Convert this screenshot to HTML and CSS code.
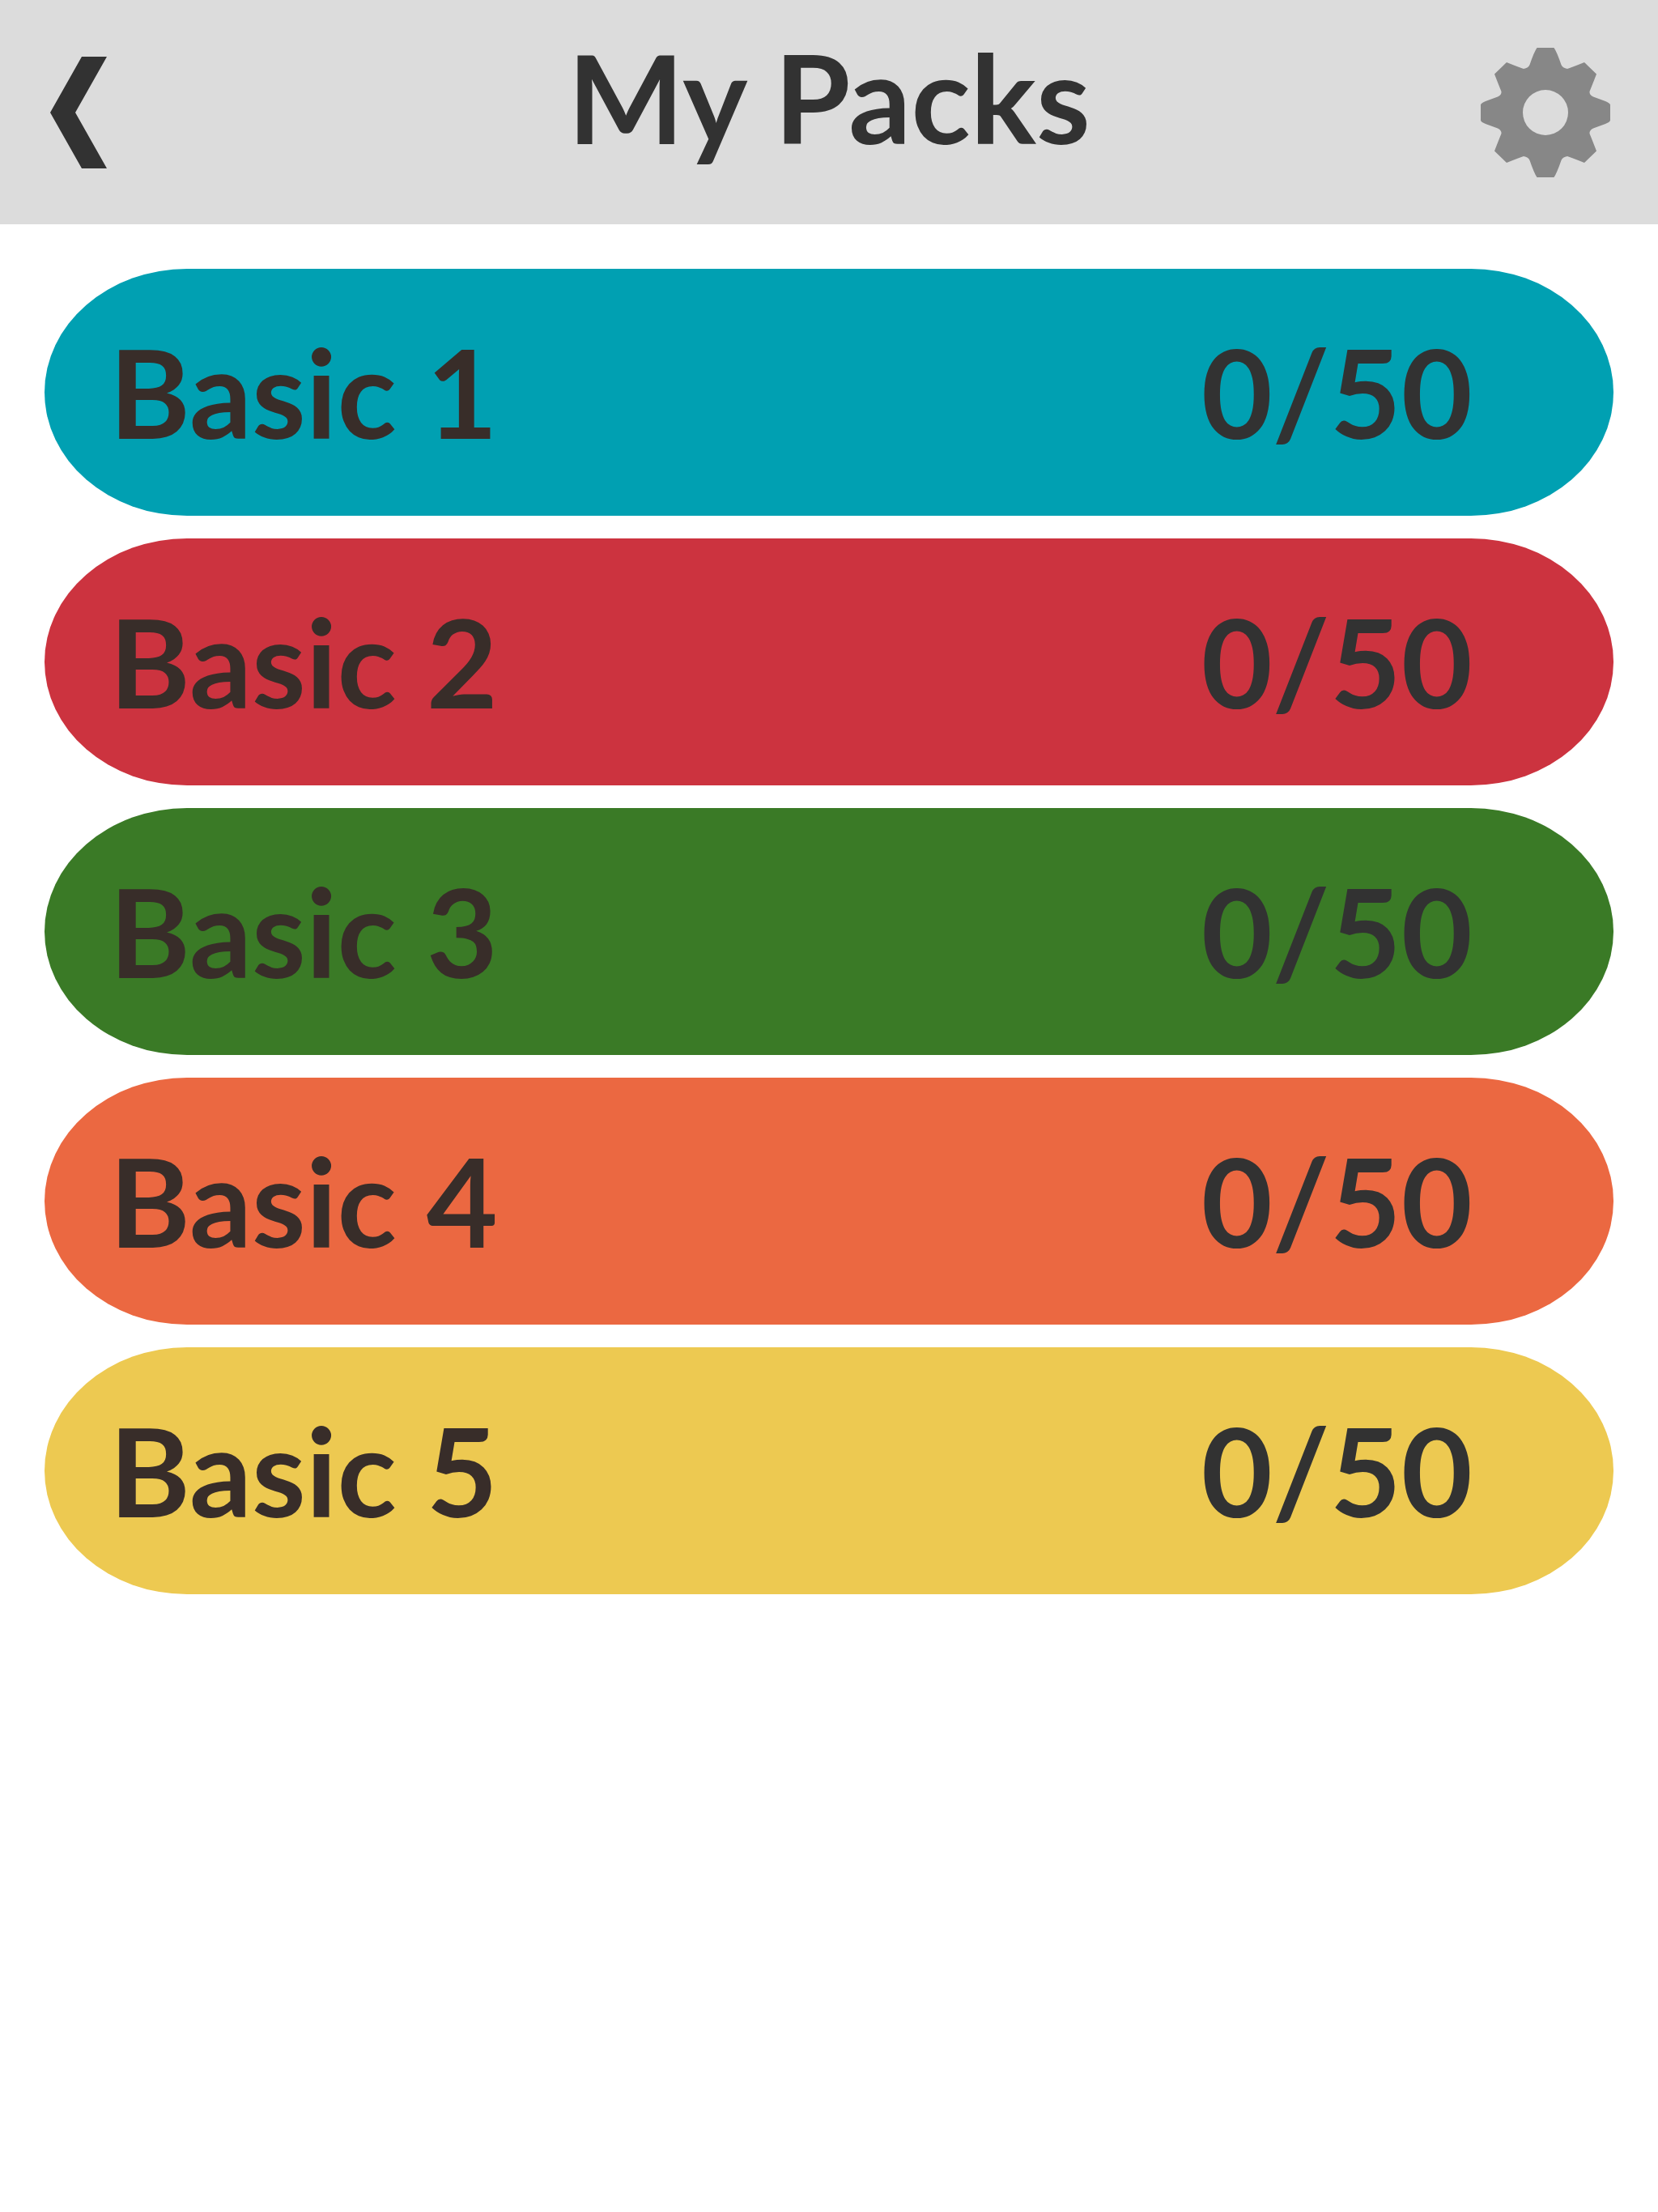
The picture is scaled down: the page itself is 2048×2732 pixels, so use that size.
FILE: index.html
```html
<!DOCTYPE html>
<html lang="en">
<head>
  <meta charset="utf-8">
  <meta name="viewport" content="width=device-width, initial-scale=1">
  <title>My Packs</title>
  <link rel="stylesheet" href="styles.css">
</head>
<body>
  <header class="topbar">
    <button class="icon-button" type="button" aria-label="Back">
      <svg class="icon-back" viewBox="0 0 70 138" aria-hidden="true">
        <path d="M39 0H70L31 69L70 138H39L0 69Z"/>
      </svg>
    </button>
    <h1 class="title">My Packs</h1>
    <button class="icon-button icon-button-end" type="button" aria-label="Settings">
      <svg class="icon-gear" viewBox="-80 -80 160 160" aria-hidden="true">
        <path fill-rule="evenodd" d="M-10.500-80H10.500Q14-75 19.500-59Q21-55 27-54Q33-56 48-62L63-47.500Q57-32 54.500-26Q54-22 59-19.500L74-14Q80-11.500 80-9.500V9.500Q80 11.500 74 14L59 19.500Q54 22 54.500 26Q57 32 63 47.500L48 62Q33 56 27 54Q21 55 19.500 59Q14 75 10.500 80H-10.500Q-14 75-19.500 59Q-21 55-27 54Q-33 56-48 62L-63 47.500Q-57 32-54.500 26Q-54 22-59 19.500L-74 14Q-80 11.500-80 9.500V-9.500Q-80-11.500-74-14L-59-19.500Q-54-22-54.500-26Q-57-32-63-47.500L-48-62Q-33-56-27-54Q-21-55-19.500-59Q-14-75-10.500-80ZM0-28A28 28 0 1 0 0 28A28 28 0 1 0 0-28Z"/>
      </svg>
    </button>
  </header>
  <main>
    <ul class="packs">
      <li><button class="pack pack-teal" type="button"><span class="name">Basic 1</span><span class="count">0/50</span></button></li>
      <li><button class="pack pack-red" type="button"><span class="name">Basic 2</span><span class="count">0/50</span></button></li>
      <li><button class="pack pack-green" type="button"><span class="name">Basic 3</span><span class="count">0/50</span></button></li>
      <li><button class="pack pack-orange" type="button"><span class="name">Basic 4</span><span class="count">0/50</span></button></li>
      <li><button class="pack pack-yellow" type="button"><span class="name">Basic 5</span><span class="count">0/50</span></button></li>
    </ul>
  </main>
</body>
</html>
```
FILE: styles.css
```css
* {
  box-sizing: border-box;
}

body {
  margin: 0;
  background: #fff;
  color: #323232;
  font-family: Lato, "Open Sans", sans-serif;
  font-size: 152px;
  font-weight: 700;
  line-height: 188px;
}

button {
  border: 0;
  padding: 0;
  background: none;
  color: inherit;
  font: inherit;
  cursor: pointer;
}

.topbar {
  display: grid;
  grid-template-columns: 160px 1fr 160px;
  align-items: center;
  min-height: 277px;
  padding: 0 59px;
  background: #dcdcdc;
}

.title {
  margin: 0;
  padding-bottom: 40px;
  font-size: inherit;
  text-align: center;
}

.icon-button {
  display: flex;
  padding-left: 3px;
}

.icon-button-end {
  justify-content: flex-end;
  padding-left: 0;
}

.icon-back {
  width: 70px;
  height: 138px;
  fill: #323232;
}

.icon-gear {
  width: 160px;
  height: 160px;
  fill: #878787;
}

.packs {
  display: flex;
  flex-direction: column;
  gap: 28px;
  margin: 0;
  padding: 55px;
  list-style: none;
}

.pack {
  display: flex;
  align-items: center;
  justify-content: space-between;
  width: 100%;
  min-height: 305px;
  padding: 0 174px 4px 80px;
  border-radius: 176px / 50%;
}

.name {
  color: #382d29;
}

.pack-teal {
  background: #00a0b2;
}

.pack-red {
  background: #cc333f;
}

.pack-green {
  background: #3a7a26;
}

.pack-orange {
  background: #eb6841;
}

.pack-yellow {
  background: #edc951;
}
```
